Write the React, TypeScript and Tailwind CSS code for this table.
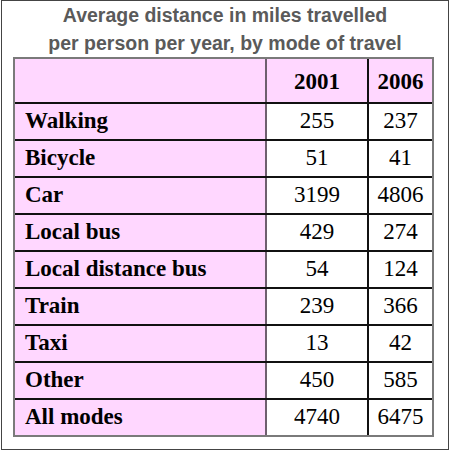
const rows: [string, string, string][] = [
  ["Walking", "255", "237"],
  ["Bicycle", "51", "41"],
  ["Car", "3199", "4806"],
  ["Local bus", "429", "274"],
  ["Local distance bus", "54", "124"],
  ["Train", "239", "366"],
  ["Taxi", "13", "42"],
  ["Other", "450", "585"],
  ["All modes", "4740", "6475"],
];

const App = () => {
  return (
    <div className="w-[450px] h-[453px] bg-white">
      <div className="ml-[1px] w-[448px] h-[450px] border border-[#444] bg-white">
        <div className="text-center font-[family-name:'Liberation_Sans',Arial,sans-serif] font-bold text-[19.5px] leading-[28px] text-[#5a5a5a]">
          <div>Average distance in miles travelled</div>
          <div>per person per year, by mode of travel</div>
        </div>

        <div className="ml-[11px] w-[421px] border-2 border-[#7a7a7a] font-[family-name:'Liberation_Serif','Times_New_Roman',serif] text-[23px] text-black">
          <div className="flex h-[45px] border-b-2 border-[#111] bg-[#ffd7ff]">
            <div className="w-[252px] border-r-2 border-[#6e5f6e]" />
            <div className="w-[102px] border-r-2 border-[#111] pt-[3px] flex items-center justify-center font-bold">
              2001
            </div>
            <div className="flex-1 pt-[3px] flex items-center justify-center font-bold">2006</div>
          </div>

          {rows.map(([label, a, b], i) => {
            const last = i === rows.length - 1;
            return (
              <div
                key={label}
                className={
                  last ? "flex h-[35px]" : "flex h-[37px] border-b-2 border-[#111]"
                }
              >
                <div className="w-[252px] border-r-2 border-[#6e5f6e] bg-[#ffd7ff] pl-[10px] flex items-center font-bold">
                  {label}
                </div>
                <div className="w-[102px] border-r-2 border-[#111] flex items-center justify-center">
                  {a}
                </div>
                <div className="flex-1 flex items-center justify-center">{b}</div>
              </div>
            );
          })}
        </div>
      </div>
    </div>
  );
};

export default App;
